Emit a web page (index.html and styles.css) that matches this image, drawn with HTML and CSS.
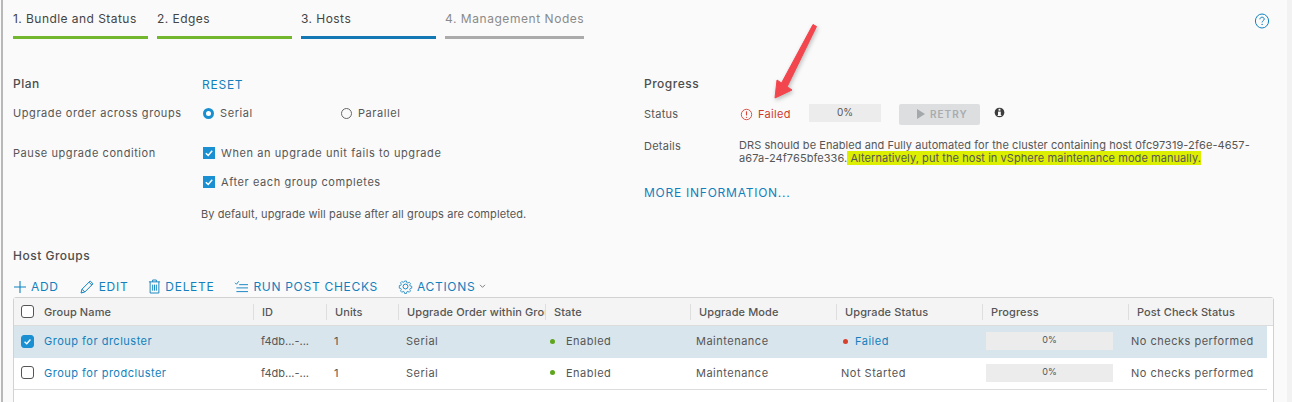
FILE: index.html
```html
<!DOCTYPE html>
<html lang="en">
<head>
<meta charset="utf-8">
<title>Upgrade - Hosts</title>
<link rel="stylesheet" href="styles.css">
</head>
<body>
<main class="page">
  <nav class="steps">
    <div class="step done">1. Bundle and Status</div>
    <div class="step done">2. Edges</div>
    <div class="step current">3. Hosts</div>
    <div class="step todo">4. Management Nodes</div>
    <svg class="help" viewBox="0 0 16 16" width="16" height="16"><ellipse cx="8" cy="8" rx="6.6" ry="7" fill="none" stroke="#0f82c0" stroke-width="1"/><path d="M5.9 6.3c0-1.3 1-2.1 2.2-2.1s2.1.8 2.1 1.9c0 1.6-2.1 1.6-2.1 3.3" fill="none" stroke="#0f82c0" stroke-width="1"/><circle cx="8.1" cy="11.4" r=".7" fill="#0f82c0"/></svg>
  </nav>

  <section class="columns">
    <div class="plan">
      <div class="row head"><h2 class="title">Plan</h2><a class="link upper">RESET</a></div>
      <div class="row order">
        <span class="label wide-label">Upgrade order across groups</span>
        <div class="radios">
          <span class="choice"><i class="radio on"></i>Serial</span>
          <span class="choice"><i class="radio"></i>Parallel</span>
        </div>
      </div>
      <div class="row pause">
        <span class="label wide-label">Pause upgrade condition</span>
        <div class="checks">
          <span class="choice"><i class="check"><svg viewBox="0 0 12 12"><path d="M2.8 6.2 5.2 8.4 9.2 3.8" fill="none" stroke="#fff" stroke-width="1.5"/></svg></i>When an upgrade unit fails to upgrade</span>
          <span class="choice"><i class="check"><svg viewBox="0 0 12 12"><path d="M2.8 6.2 5.2 8.4 9.2 3.8" fill="none" stroke="#fff" stroke-width="1.5"/></svg></i>After each group completes</span>
          <p class="hint">By default, upgrade will pause after all groups are completed.</p>
        </div>
      </div>
    </div>

    <div class="progress">
      <h2 class="title">Progress</h2>
      <div class="status-row">
        <span class="label">Status</span>
        <span class="failed"><svg viewBox="0 0 14 14" width="13" height="13"><circle cx="7" cy="7" r="5.6" fill="none" stroke="#d9473a" stroke-width="1"/><path d="M7 3.6v4.4" stroke="#d9473a" stroke-width="1.2"/><circle cx="7" cy="10" r=".7" fill="#d9473a"/></svg>Failed</span>
        <span class="meter wide">0%</span>
        <span class="retry"><svg viewBox="0 0 8 10" width="8" height="10"><path d="M0 0 8 5 0 10z" fill="#a4a8ab"/></svg>RETRY</span>
        <svg class="info" viewBox="0 0 12 12" width="11" height="11"><circle cx="6" cy="6" r="5.3" fill="#3d3d3d"/><rect x="4.4" y="5" width="3" height="4.6" fill="#fff"/><rect x="5" y="2" width="2" height="2" fill="#fff"/><rect x="3.9" y="8.8" width="4.2" height="1" fill="#fff"/></svg>
      </div>
      <div class="details-row">
        <span class="label">Details</span>
        <p class="details">DRS should be Enabled and Fully automated for the cluster containing host 0fc97319-2f6e-4657-<br>a67a-24f765bfe336.<mark class="mark"> Alternatively, put the host in vSphere maintenance mode manually.</mark></p>
      </div>
      <a class="link upper more">MORE INFORMATION...</a>
    </div>
  </section>

  <h2 class="title groups">Host Groups</h2>
  <div class="toolbar">
    <a class="tool"><svg viewBox="0 0 14 14" width="14" height="14"><path d="M7 1v12M1 7h12" stroke="#0f82c0" stroke-width="1.1"/></svg>ADD</a>
    <a class="tool"><svg viewBox="0 0 16 16" width="16" height="16"><path d="M2 14l1-3.8L11.2 2l2.8 2.8-8.2 8.2zM3 10.2l2.8 2.8M10 3.2 12.8 6" fill="none" stroke="#0f82c0" stroke-width="1"/></svg>EDIT</a>
    <a class="tool"><svg viewBox="0 0 14 16" width="13" height="15"><path d="M1 3h12M5 3V1h4v2M2.3 3v12h9.4V3M5 6v6.5M7 6v6.5M9 6v6.5" fill="none" stroke="#0f82c0" stroke-width="1"/></svg>DELETE</a>
    <a class="tool"><svg viewBox="0 0 16 14" width="15" height="13"><path d="M1 3l1.6 1.6L5 1.4M5.5 5H15M2.5 8.5H15M2.5 12.5H15" fill="none" stroke="#0f82c0" stroke-width="1"/></svg>RUN POST CHECKS</a>
    <a class="tool"><svg viewBox="0 0 16 16" width="15" height="15"><circle cx="8" cy="8" r="2.6" fill="none" stroke="#0f82c0"/><path d="M6.8 1h2.4l.4 2 1.4.6 1.7-1.1 1.7 1.7-1.1 1.7.6 1.4 2 .4v2.4l-2 .4-.6 1.4 1.1 1.7-1.7 1.7-1.7-1.1-1.4.6-.4 2H6.8l-.4-2-1.4-.6-1.7 1.1-1.7-1.7 1.1-1.7-.6-1.4-2-.4V6.8l2-.4.6-1.4-1.1-1.7 1.7-1.7 1.7 1.1 1.4-.6z" transform="translate(1.3 1.3) scale(.84)" fill="none" stroke="#0f82c0"/></svg>ACTIONS<svg class="caret" viewBox="0 0 8 6" width="7" height="5"><path d="M1 1l3 3 3-3" fill="none" stroke="#666" stroke-width="1"/></svg></a>
  </div>

  <div class="grid">
    <div class="tr th">
      <div class="cell first"><i class="box"></i>Group Name</div>
      <div class="cell">ID</div>
      <div class="cell">Units</div>
      <div class="cell">Upgrade Order within Group</div>
      <div class="cell">State</div>
      <div class="cell">Upgrade Mode</div>
      <div class="cell">Upgrade Status</div>
      <div class="cell">Progress</div>
      <div class="cell">Post Check Status</div>
    </div>
    <div class="tr selected">
      <div class="cell first"><i class="box on"><svg viewBox="0 0 12 12"><path d="M2.8 6.2 5.2 8.4 9.2 3.8" fill="none" stroke="#fff" stroke-width="1.5"/></svg></i><a class="link">Group for drcluster</a></div>
      <div class="cell id">f4db...-...</div>
      <div class="cell">1</div>
      <div class="cell">Serial</div>
      <div class="cell"><i class="dot green"></i>Enabled</div>
      <div class="cell">Maintenance</div>
      <div class="cell"><i class="dot red"></i><a class="link">Failed</a></div>
      <div class="cell"><span class="meter small">0%</span></div>
      <div class="cell">No checks performed</div>
    </div>
    <div class="tr">
      <div class="cell first"><i class="box"></i><a class="link">Group for prodcluster</a></div>
      <div class="cell id">f4db...-...</div>
      <div class="cell">1</div>
      <div class="cell">Serial</div>
      <div class="cell"><i class="dot green"></i>Enabled</div>
      <div class="cell">Maintenance</div>
      <div class="cell">Not Started</div>
      <div class="cell"><span class="meter small">0%</span></div>
      <div class="cell">No checks performed</div>
    </div>
  </div>

  <svg class="arrow" viewBox="0 0 60 90" width="60" height="90"><path d="M50 9.5 53.5 11.5 24 72 18 69z" fill="#f2454d" stroke="#f2454d" stroke-width="1" stroke-linejoin="round"/><path d="M12 83 14 65 29 75z" fill="#f2454d" stroke="#f2454d" stroke-linejoin="round"/></svg>
</main>
</body>
</html>
```
FILE: styles.css
```css
* { box-sizing: border-box; }
html, body { margin: 0; height: 402px; overflow: hidden; }
body { background: #fafafa; font-family: Inter, "Liberation Sans", sans-serif; font-size: 11px; color: #565656; }
.page { position: relative; height: 402px; margin-left: 1px; padding-left: 10px; border-left: 2px solid #b8b8b8; border-right: 5px solid #f2f2f2; overflow: hidden; }
.steps { display: flex; gap: 9px; height: 39px; position: relative; }
.step { width: 135px; padding-top: 12px; font-size: 12px; letter-spacing: .45px; color: #444; border-bottom: 3px solid; line-height: 14px; white-space: nowrap; }
.step.done { border-color: #72b72e; }
.step.current { border-color: #1478b4; }
.step.todo { width: 139px; border-color: #ababab; color: #8a8a8a; letter-spacing: .55px; }
.help { position: absolute; right: 17px; top: 13px; }
.columns { display: flex; padding-top: 38px; height: 195px; }
.plan { width: 631px; }
.title { margin: 0; font-size: 12px; line-height: 14px; font-weight: 500; letter-spacing: .5px; color: #4d4d4d; }
.row { display: flex; }
.row > :first-child { width: 189px; flex: none; }
.head { height: 14px; align-items: center; }
.label { color: #565656; line-height: 14px; letter-spacing: .25px; }
.wide-label { letter-spacing: .57px; }
.upper { font-size: 12px; letter-spacing: .75px; }
.link { color: #1380bd; }
.order { margin-top: 15px; }
.radios { display: flex; margin-left: 1px; }
.choice { display: flex; align-items: center; line-height: 14px; letter-spacing: .58px; }
.radios .choice { width: 138px; }
.radio { width: 11px; height: 11px; border-radius: 50%; border: 1px solid #666; margin-right: 6px; }
.radio.on { border: 3.5px solid #1a8fd0; background: #fff; }
.pause { margin-top: 26px; }
.checks { display: flex; flex-direction: column; }
.checks .choice { height: 14px; margin-bottom: 15px; margin-left: 1px; }
.check { width: 12px; height: 12px; background: #1a90d2; margin-right: 6px; display: block; }
.check svg, .box svg { display: block; width: 100%; height: 100%; }
.hint { margin: 3px 0 0 -1px; line-height: 14px; letter-spacing: .1px; }
.progress { flex: 1; }
.status-row { display: flex; align-items: center; margin-top: 11px; height: 24px; }
.status-row .label { width: 96px; }
.failed { display: flex; align-items: center; gap: 5px; width: 69px; color: #cf3a2c; letter-spacing: .3px; }
.meter { display: block; background: #ececec; text-align: center; color: #565656; letter-spacing: 0; }
.meter.wide { width: 72px; height: 18px; line-height: 17px; font-size: 10px; margin-right: 18px; margin-top: -3px; }
.retry { width: 81px; height: 21px; padding-left: 18px; background: #dcdee0; border-radius: 2px; display: flex; align-items: center; gap: 5px; color: #a8acaf; font-weight: 600; font-size: 10px; letter-spacing: 1px; margin-right: 14px; }
.info { margin-top: -3px; }
.details-row { display: flex; margin-top: 13px; }
.details-row .label { width: 95px; flex: none; }
.details { margin: 0; line-height: 13px; color: #565656; white-space: nowrap; letter-spacing: .07px; }
.mark { background: #dcef00; color: #565656; }
.more { display: block; margin-top: 21px; line-height: 14px; }
.groups { margin-top: 15px; }
.toolbar { display: flex; margin-top: 15px; height: 17px; align-items: center; }
.tool { display: flex; align-items: center; gap: 4px; color: #1380bd; font-size: 12px; letter-spacing: .7px; margin-right: 20px; }
.grid { width: 1261px; height: 120px; margin-top: 2px; background: #fff; border: 1px solid #d2d2d2; border-radius: 3px 3px 0 0; }
.tr { display: grid; grid-template-columns: 239px 73px 72px 147px 145px 146px 146px 146px 1fr; width: 1253px; height: 32px; align-items: center; border-bottom: 1px solid #dcdcdc; color: #565656; letter-spacing: .5px; }
.th { width: 100%; height: 28px; background: #f4f4f4; font-weight: 500; letter-spacing: .1px; }
.selected { background: #d9e5ec; border-bottom: none; }
.cell { display: flex; align-items: center; white-space: nowrap; padding-left: 8px; padding-bottom: 2px; overflow: hidden; }
.th .cell { height: 16px; padding-bottom: 0; border-left: 1px solid #dedede; }
.th .cell.first { border-left: none; }
.cell.first { padding-left: 7px; }
.cell.id { letter-spacing: 0; }
.tr:not(.th) .cell:nth-child(5) { padding-left: 5px; }
.tr:not(.th) .cell:nth-child(6) { padding-left: 6px; }
.tr:not(.th) .cell:nth-child(7) { padding-left: 5px; }
.tr:not(.th) .cell:nth-child(8) { padding-left: 4px; }
.tr:not(.th) .cell:nth-child(9) { padding-left: 3px; }
.box { width: 13px; height: 13px; border: 1px solid #555; border-radius: 3px; background: #fff; margin-right: 10px; flex: none; }
.box.on { background: #1a90d2; border-color: #1a90d2; }
.dot { width: 5px; height: 5px; border-radius: 50%; margin-right: 11px; }
.dot.green { background: #5fa51f; }
.dot.red { background: #d8402c; margin: 0 7px 0 2px; }
.meter.small { width: 127px; height: 18px; line-height: 16px; font-size: 9px; }
.arrow { position: absolute; left: 760px; top: 15px; filter: drop-shadow(1px 2px 2px rgba(0,0,0,.25)); }
```
